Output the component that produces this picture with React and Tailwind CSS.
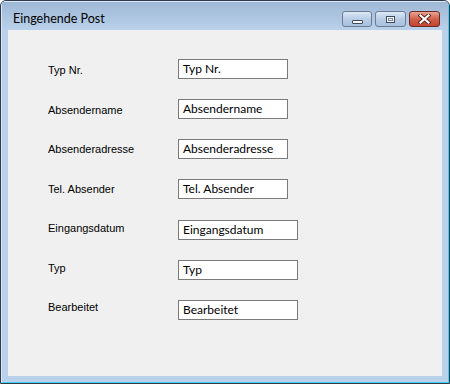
import React from "react";

const fields = [
  { label: "Typ Nr.", wide: false },
  { label: "Absendername", wide: false },
  { label: "Absenderadresse", wide: false },
  { label: "Tel. Absender", wide: false },
  { label: "Eingangsdatum", wide: true },
  { label: "Typ", wide: true },
  { label: "Bearbeitet", wide: true }
];

const CaptionButton = ({ children, close = false, className = "" }) => (
  <div
    className={`h-[16px] flex items-center justify-center rounded-[3px] border ${
      close
        ? "border-[#6b2a22] bg-gradient-to-b from-[#e8a493] via-[#d0604a] to-[#c24530]"
        : "border-[#6b7c94] bg-gradient-to-b from-[#dce8f5] via-[#b8cce4] to-[#a9c0dc]"
    } ${className}`}
  >
    {children}
  </div>
);

export default function App() {
  return (
    <div
      className="w-[450px] h-[384px] rounded-t-[6px] border border-[#2e3b4c] bg-[#b9d1ea] overflow-hidden"
      style={{ fontFamily: '"Liberation Sans", Arial, sans-serif' }}
    >
      <div className="h-full flex flex-col rounded-t-[5px] border-l border-t border-l-[#dde8f4] border-t-[#dde8f4] border-r border-b border-r-[#45cdee] border-b-[#45cdee]">
        {/* Title bar */}
        <div className="h-[28px] flex items-start justify-between bg-gradient-to-b from-[#9fb8d6] to-[#b9d1ea] pl-[11px] pr-[8px] pt-[9px]">
          <span
            className="text-[12.5px] leading-[16px] text-black"
            style={{ fontFamily: 'Lato, "Noto Sans", sans-serif' }}
          >
            Eingehende Post
          </span>
          <div className="flex items-start gap-[3px]">
            <CaptionButton className="w-[30px]">
              <div className="w-[11px] h-[4px] mt-[6px] rounded-[1px] border border-[#3b4a5e] bg-white" />
            </CaptionButton>
            <CaptionButton className="w-[31px]">
              <div className="w-[9px] h-[7px] border border-[#3b4a5e] bg-[#f4f7fb] flex items-center justify-center">
                <div className="w-[5px] h-[3px] border border-[#7b8aa0]" />
              </div>
            </CaptionButton>
            <CaptionButton close className="w-[31px]">
              <svg width="13" height="10" viewBox="0 0 13 10">
                <path d="M2.5 1.5 L10.5 8.5 M10.5 1.5 L2.5 8.5" stroke="#5a2018" strokeWidth="4" strokeLinecap="square" />
                <path d="M2.5 1.5 L10.5 8.5 M10.5 1.5 L2.5 8.5" stroke="#ffffff" strokeWidth="2.2" strokeLinecap="square" />
              </svg>
            </CaptionButton>
          </div>
        </div>

        {/* Client area */}
        <div className="flex-1 mx-[6px] mb-[6px] bg-[#f0f0f0] flex">
          <div className="w-[170px] pl-[40px] pt-[34px] flex flex-col gap-[26.5px]">
            {fields.map((f) => (
              <div key={f.label} className="text-[11px] leading-[13px] text-black whitespace-nowrap">
                {f.label}
              </div>
            ))}
          </div>
          <div className="pt-[29px] flex flex-col gap-[20.17px]">
            {fields.map((f) => (
              <div
                key={f.label}
                className={`${f.wide ? "w-[120px]" : "w-[110px]"} h-[20px] border border-[#7a7a7a] bg-white pl-[4px] pt-[1px] text-[12px] leading-[15px] text-black whitespace-nowrap overflow-hidden`}
                style={{ fontFamily: 'Lato, "Noto Sans", sans-serif' }}
              >
                {f.label}
              </div>
            ))}
          </div>
        </div>
      </div>
    </div>
  );
}
